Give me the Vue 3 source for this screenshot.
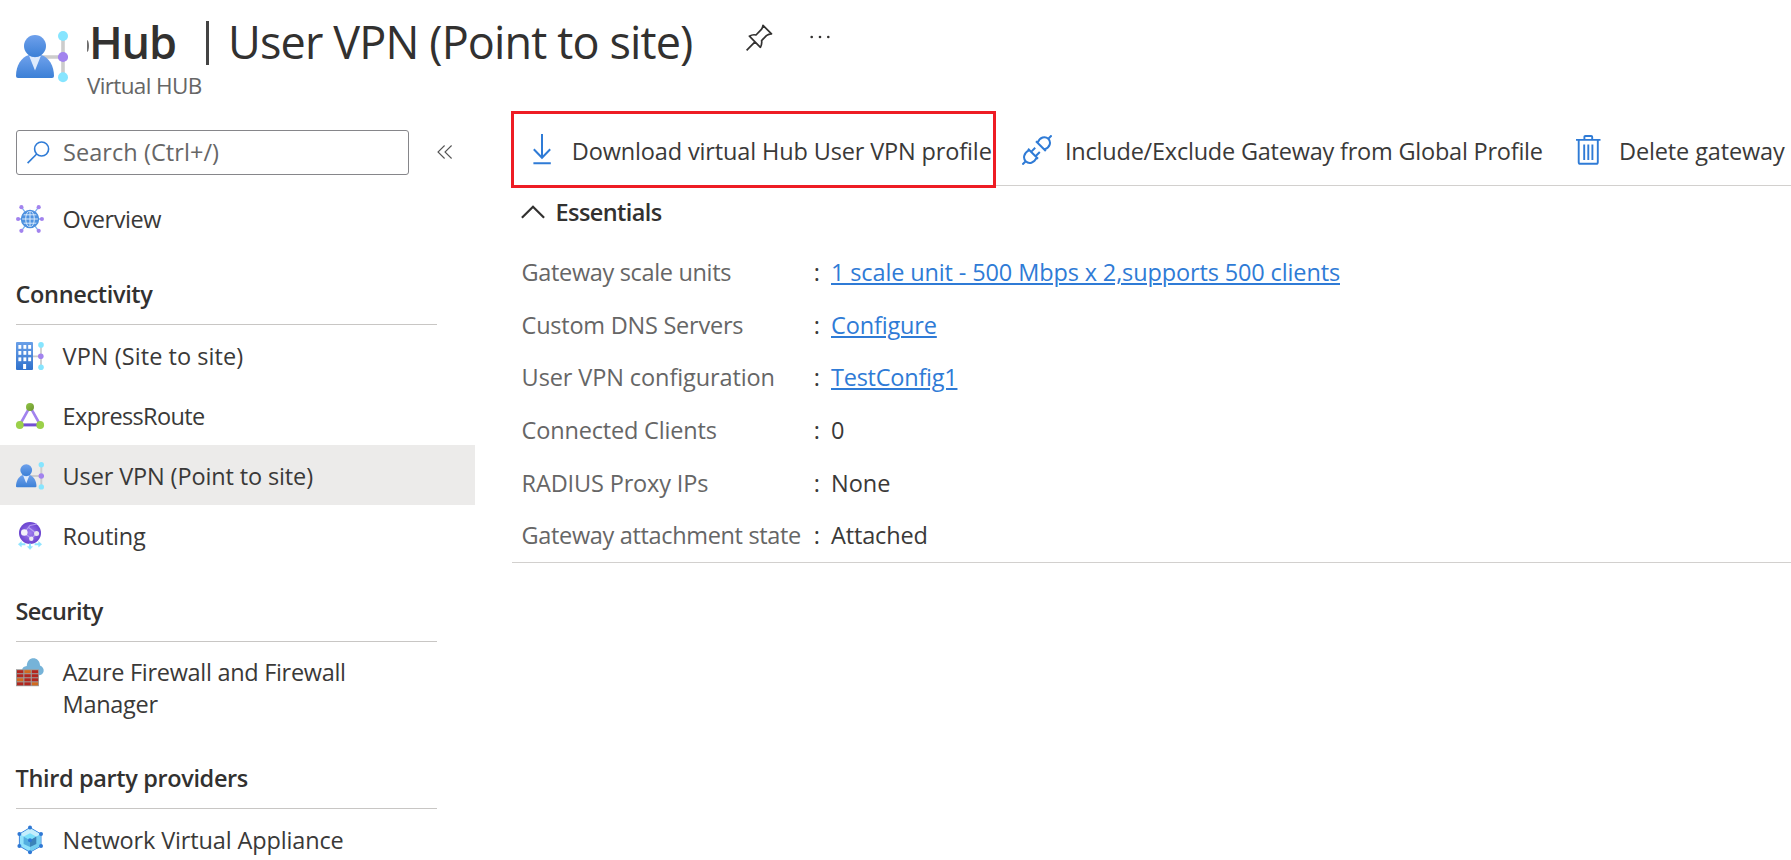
<script setup>
const groups = [
  { title: '', items: [{ icon: 'hub', label: 'Overview', track: -0.42 }] },
  {
    title: 'Connectivity', track: -0.34,
    items: [
      { icon: 'site', label: 'VPN (Site to site)', track: 0.06 },
      { icon: 'express', label: 'ExpressRoute', track: -0.63 },
      { icon: 'user', label: 'User VPN (Point to site)', track: -0.13, active: true },
      { icon: 'routing', label: 'Routing', track: -0.24 }
    ]
  },
  {
    title: 'Security', track: -0.55,
    items: [{ icon: 'firewall', label: 'Azure Firewall and Firewall Manager', track: -0.3, tall: true }]
  },
  {
    title: 'Third party providers', track: -0.36,
    items: [{ icon: 'appliance', label: 'Network Virtual Appliance', track: -0.14 }]
  }
]

const facts = [
  { name: 'Gateway scale units', nt: -0.34, value: '1 scale unit - 500 Mbps x 2,supports 500 clients', vt: -0.13, link: true },
  { name: 'Custom DNS Servers', nt: -0.24, value: 'Configure', vt: -0.15, link: true },
  { name: 'User VPN configuration', nt: -0.1, value: 'TestConfig1', vt: -0.24, link: true },
  { name: 'Connected Clients', nt: -0.18, value: '0', vt: 0 },
  { name: 'RADIUS Proxy IPs', nt: -0.15, value: 'None', vt: 0 },
  { name: 'Gateway attachment state', nt: -0.34, value: 'Attached', vt: -0.16 }
]

const spacing = (v) => ({ letterSpacing: v + 'px' })
const columns = [2.4, 7.4, 12.2]
const windowRows = [3, 9, 15.4]
const bricks = [
  ['#b3261e', '#d2691e', '#b3261e'],
  ['#b3261e', '#b3261e', '#b3261e'],
  ['#d2691e', '#b3261e', '#b3261e'],
  ['#b3261e', '#b3261e', '#d2691e']
]
const cubeNodes = [[14, 1.6], [25, 8], [25, 20], [14, 26.2], [3.4, 20], [3.4, 8], [14, 14.2]]
</script>

<template>
  <div class="page">
    <svg class="defs" aria-hidden="true">
      <defs>
        <linearGradient id="blue" x1="0" y1="0" x2="0" y2="1">
          <stop offset="0" stop-color="#6fa1ec" /><stop offset="1" stop-color="#3c80d6" />
        </linearGradient>
        <linearGradient id="tower" x1="0" y1="0" x2="0" y2="1">
          <stop offset="0" stop-color="#6aa0e8" /><stop offset="1" stop-color="#2f71cc" />
        </linearGradient>
        <radialGradient id="violet">
          <stop offset="0" stop-color="#a07df0" /><stop offset="1" stop-color="#6a43cf" />
        </radialGradient>
        <linearGradient id="leaf" x1="0" y1="0" x2="1" y2="1">
          <stop offset="0" stop-color="#92c746" /><stop offset="1" stop-color="#6c9430" />
        </linearGradient>
        <symbol id="user-vpn" viewBox="0 0 52 52">
          <path d="M26 26H47M47 5V46" stroke="#ccc" stroke-width="3.6" fill="none" />
          <path d="M2 47Q0 47 0 45C0 35 5 26 13 24H25C33 26 38 35 38 45Q38 47 36 47Z" fill="url(#blue)" />
          <path d="M13 24.5 19 39.5 25 24.5Q19 28 13 24.5Z" fill="#dfebfc" />
          <circle cx="19" cy="15" r="11" fill="url(#blue)" />
          <circle cx="47" cy="5" r="5" fill="#86e5ff" />
          <circle cx="47" cy="26" r="5.1" fill="#a283ee" />
          <circle cx="47" cy="46.3" r="5" fill="#86e5ff" />
        </symbol>
      </defs>
    </svg>

    <header class="header">
      <svg class="logo"><use href="#user-vpn" /></svg>
      <div class="heading">
        <h1 class="title">
          <span class="cut" /><b class="name">Hub</b><i class="divider" /><span class="section">User VPN (Point to site)</span>
          <svg class="pin" width="28" height="28" viewBox="0 0 28 28" fill="none" stroke="#323130" stroke-width="1.7" stroke-linejoin="round">
            <path d="M17 1.3 25.5 9.8Q23 9.6 20.4 11.6L15.6 16.6Q16.2 20 14.4 23.3L3.4 12.2Q6.5 10.2 10 11L15.4 5.4Q16.8 3.4 17 1.3ZM9.2 17.6.6 26.4" />
          </svg>
          <svg class="dots" width="20" height="4" viewBox="0 0 20 4" fill="#323130">
            <circle cx="1.7" cy="2" r="1.3" /><circle cx="10" cy="2" r="1.3" /><circle cx="18.3" cy="2" r="1.3" />
          </svg>
        </h1>
        <p class="subtitle">Virtual HUB</p>
      </div>
    </header>

    <div class="body">
      <nav class="sidebar">
        <div class="search-row">
          <div class="search">
            <svg width="23" height="23" viewBox="0 0 23 23" fill="none" stroke="#2f7bd6" stroke-width="1.6">
              <circle cx="14.6" cy="8" r="7" /><path d="M9.7 13 .6 22.1" />
            </svg>
            <span>Search (Ctrl+/)</span>
          </div>
          <svg class="collapse" width="16" height="14" viewBox="0 0 16 14" fill="none" stroke="#555" stroke-width="1.1">
            <path d="M7.6.5 1 7l6.6 6.5M14.6.5 8 7l6.6 6.5" />
          </svg>
        </div>

        <section v-for="g in groups" :key="g.title" class="group">
          <h2 v-if="g.title" :style="spacing(g.track)">{{ g.title }}</h2>
          <div v-for="it in g.items" :key="it.label" class="item" :class="{ active: it.active, tall: it.tall }">
            <svg v-if="it.icon === 'user'" class="icon"><use href="#user-vpn" /></svg>
            <svg v-else class="icon" viewBox="0 0 28 28">
              <g v-if="it.icon === 'hub'">
                <path d="M5.5 2.2 22.5 25.8M22.5 2.2 5.5 25.8M2 14H26" stroke="#7fb3ee" stroke-width="1.3" />
                <circle cx="14" cy="14" r="8.6" fill="#4f93e0" />
                <g fill="none" stroke="#d5e8fb" stroke-width="1">
                  <ellipse cx="14" cy="14" rx="4.3" ry="8" /><path d="M14 6v16M6 14h16M7.5 9.8h13M7.5 18.2h13" />
                </g>
                <circle cx="14" cy="14" r="8.6" fill="none" stroke="#4a8edd" stroke-width="1.2" />
                <g fill="#a283ee">
                  <circle cx="5.4" cy="2.2" r="2.1" /><circle cx="22.7" cy="2.2" r="2.1" /><circle cx="2.1" cy="14" r="2.1" />
                  <circle cx="25.9" cy="14" r="2.1" /><circle cx="5.4" cy="25.8" r="2.1" /><circle cx="22.7" cy="25.8" r="2.1" />
                </g>
              </g>
              <g v-else-if="it.icon === 'site'">
                <path d="M16 14.3H25M25 3V25" stroke="#ccc" stroke-width="1.8" />
                <rect width="17" height="28" rx="1" fill="url(#tower)" />
                <g fill="#fff">
                  <template v-for="y in windowRows" :key="y">
                    <rect v-for="x in columns" :key="x" :x="x" :y="y" width="2.9" height="3.8" />
                  </template>
                  <rect x="7.1" y="22" width="3" height="5" />
                </g>
                <circle cx="25" cy="2.9" r="2.8" fill="#86e5ff" /><circle cx="24.8" cy="14.3" r="2.8" fill="#a283ee" />
                <circle cx="25" cy="25.2" r="2.8" fill="#86e5ff" />
              </g>
              <g v-else-if="it.icon === 'express'">
                <path d="M4 22.5 14 4.7 24 22.5" stroke="#a283ee" stroke-width="2.6" fill="none" />
                <path d="M4 22.9H24" stroke="#7350d4" stroke-width="3" />
                <circle cx="14" cy="4.9" r="4" fill="url(#leaf)" />
                <circle cx="3.8" cy="23" r="3.9" fill="#9bd04a" /><circle cx="24.2" cy="23" r="3.9" fill="#9bd04a" />
              </g>
              <g v-else-if="it.icon === 'routing'">
                <circle cx="14" cy="11" r="11" fill="url(#violet)" />
                <path d="M8 11 14 3.5 21 2M12 5 20.5 11.5M8 11 15.5 16.5 20.5 11.5" fill="none" stroke="#b49df2" stroke-width="1.2" />
                <circle cx="8.3" cy="10.5" r="3.3" fill="#f3f1fa" /><circle cx="20.6" cy="11.4" r="2.5" fill="#e8e6ee" />
                <circle cx="15.3" cy="16.8" r="2.2" fill="#eceaf2" />
                <g stroke="#8fe4ff" fill="#8fe4ff">
                  <path d="M4 22.3H9.4M18.6 22.3H24M14 21.5V25" stroke-width="2" />
                  <path d="M5.4 19.6v5.4L2.2 22.3ZM22.6 19.6v5.4L25.8 22.3ZM11.3 24.6h5.4L14 27.6Z" stroke-width=".4" />
                </g>
              </g>
              <g v-else-if="it.icon === 'firewall'">
                <path d="M8 17.5Q5.5 15 5.7 12.5 6.5 8.4 10.8 8C10.8-2.6 24-2.2 24 7.6 29.5 9.6 29 17.5 22 17.5Z" fill="#76b3d8" />
                <rect y="11.2" width="23" height="17" fill="#9d9d9d" />
                <template v-for="(row, r) in bricks" :key="r">
                  <rect v-for="(color, c) in row" :key="c" :x="1 + c * 7.4" :y="12.2 + r * 4.05" width="6.3" height="3" :fill="color" />
                </template>
              </g>
              <g v-else>
                <path d="M14 1.6 25 8V20L14 26.2 3.4 20V8Z" fill="#90e2fb" stroke="#3f86dc" stroke-width="1" />
                <path d="M14 2.2 24.5 8.2 14 14.2 4 8.2Z" fill="#c5eefc" />
                <path d="M14 14.2 24.5 8.3V19.7L14 25.7Z" fill="#73cdf0" />
                <path d="M14 7.3 20.3 10.6 14 14.2 7.6 10.6Z" fill="#7be0fa" />
                <path d="M7.6 10.6 14 14.2V21L7.6 18Z" fill="#52aee0" /><path d="M20.3 10.6 14 14.2V21L20.3 18Z" fill="#3b83b8" />
                <circle v-for="(n, i) in cubeNodes" :key="i" :cx="n[0]" :cy="n[1]" r="2" fill="#2f78d4" />
              </g>
            </svg>
            <span class="label" :style="spacing(it.track)">{{ it.label }}</span>
          </div>
        </section>
      </nav>

      <main class="main">
        <div class="toolbar">
          <button class="cmd highlight">
            <svg width="20" height="31" viewBox="0 0 20 31" fill="none" stroke="#2f7bd6" stroke-width="2">
              <path d="M9 0V24M.8 15.3 9 23.7 17.2 15.3M.4 29.3H17.8" />
            </svg>
            <span>Download virtual Hub User VPN profile</span>
          </button>
          <button class="cmd include">
            <svg width="30" height="30" viewBox="0 0 30 30" fill="none" stroke="#2f7bd6" stroke-width="2">
              <path d="M14 6.2 23.8 16M15.6 7.6C18 2 23 .8 26.3 3.7 29.4 7 28.2 12.5 22.4 14.4M26.3 3.7 29.6.4" />
              <path d="M6 13.8 16 23.8M7.2 15.2C1.6 18 .8 23.2 3.7 26.3 7 29.3 12 28.2 14.6 22.6M3.7 26.3.4 29.6M9.4 16.6 13.2 12.8M13.8 21 17.8 17" />
            </svg>
            <span>Include/Exclude Gateway from Global Profile</span>
          </button>
          <button class="cmd delete">
            <svg width="25" height="30" viewBox="0 0 25 30" fill="none" stroke="#2f7bd6" stroke-width="1.9">
              <path d="M0 4.9H24.5M8.4 4.5V2Q8.4 1 9.4 1H15.2Q16.2 1 16.2 2V4.5M2.7 5V27.2Q2.7 28.8 4.3 28.8H20.2Q21.8 28.8 21.8 27.2V5M8.2 9.5V25M12.3 9.5V25M16.4 9.5V25" />
            </svg>
            <span>Delete gateway</span>
          </button>
        </div>

        <section class="essentials">
          <h3>
            <svg width="24" height="14" viewBox="0 0 24 14" fill="none" stroke="#323130" stroke-width="2.2"><path d="M.9 12.8 12 1.7 23.1 12.8" /></svg>
            <span>Essentials</span>
          </h3>
          <dl>
            <div v-for="f in facts" :key="f.name" class="fact">
              <dt :style="spacing(f.nt)">{{ f.name }}</dt>
              <span class="colon">:</span>
              <dd><a v-if="f.link" :style="spacing(f.vt)">{{ f.value }}</a><span v-else :style="spacing(f.vt)">{{ f.value }}</span></dd>
            </div>
          </dl>
        </section>
      </main>
    </div>
  </div>
</template>

<style>
body { margin: 0; background: #fff; overflow: hidden; }
</style>

<style scoped>
.page {
  width: 1791px; height: 860px; overflow: hidden; background: #fff; color: #3a3938;
  font: 400 23.5px/32px "Open Sans", "Noto Sans", sans-serif; font-weight: 370;
}
.page * { box-sizing: border-box; }
.defs { position: absolute; width: 0; height: 0; }
h1, h2, h3, p, dl, dd { margin: 0; }
h1, h2, h3 { color: #323130; }
svg { flex: none; display: block; }

.header { display: flex; height: 111px; padding-left: 16px; }
.logo { width: 52px; height: 52px; margin-top: 31px; }
.heading { margin-left: 19px; padding-top: 11px; }
.title { display: flex; height: 60px; font-size: 45px; line-height: 62px; font-weight: 370; }
.cut { width: 2px; height: 12px; margin-top: 29px; background: #323130; border-radius: 0 2px 2px 0 / 0 6px 6px 0; opacity: .7; }
.name { width: 116px; font-weight: 640; letter-spacing: -1.2px; }
.divider { width: 3px; height: 44px; margin-top: 10px; margin-left: 1px; background: #444; }
.section { width: 518px; margin-left: 19px; letter-spacing: -.87px; white-space: nowrap; }
.pin { margin-top: 13px; }
.dots { margin: 24px 0 0 36px; }
.subtitle { margin-top: -1px; font-size: 22.5px; letter-spacing: -.65px; color: #666; line-height: 32px; }

.body { display: flex; }
.sidebar { width: 475px; }
.search-row { display: flex; align-items: center; padding: 19px 0 13px 16px; }
.search { display: flex; align-items: center; width: 393px; height: 45px; padding-left: 10px; border: 1px solid #86868a; border-radius: 3px; color: #666; }
.search span { margin: 0 0 1px 13px; letter-spacing: .06px; }
.collapse { margin: 0 0 2px 28px; }
.item { display: flex; align-items: center; height: 60px; padding: 0 16px; }
.item.active { background: #ecebea; }
.icon { width: 28px; height: 28px; margin-top: 2px; overflow: visible; }
.label { margin-left: 18.6px; padding-top: 2px; }
.group h2 { display: flex; align-items: flex-end; width: 421px; height: 77px; margin-left: 16px; padding-bottom: 14px; border-bottom: 1px solid #c8c6c4; font-size: 23.5px; font-weight: 600; line-height: 32px; text-indent: -.5px; }
.item.tall { height: 90px; align-items: flex-start; padding-top: 14px; }
.tall .label { width: 320px; padding-top: 0; }

.main { width: 1279px; margin-left: 37px; }
.toolbar { display: flex; height: 75px; border-bottom: 1px solid #d2d0ce; }
.cmd { display: flex; align-items: center; height: 74px; padding: 3px 0 0; border: 0; background: none; color: inherit; font: inherit; text-align: left; white-space: nowrap; }
.cmd span { padding-top: 3px; }
.highlight { width: 485px; height: 77px; margin-left: -1px; padding: 0 0 0 19px; border: 3px solid #ee1c24; }
.highlight span { margin-left: 18.8px; letter-spacing: -.14px; }
.include { margin-left: 26px; }
.include span { width: 497px; margin-left: 13px; letter-spacing: -.22px; }
.delete { margin-left: 14px; }
.delete span { margin-left: 18px; letter-spacing: -.13px; }

.essentials { height: 377px; border-bottom: 1px solid #d2d0ce; padding-left: 9px; }
.essentials h3 { display: flex; align-items: center; height: 60px; font-size: 23.5px; font-weight: 600; letter-spacing: -.58px; }
.essentials h3 span { margin: 0 0 8px 10.5px; }
.essentials h3 svg { margin-bottom: 9px; }
.fact { display: flex; height: 52.6px; align-items: center; }
dt { width: 292px; padding-left: .6px; color: #666; }
.colon { width: 18px; padding-left: .7px; }
a { color: #2f7bd6; text-decoration: underline; text-decoration-thickness: 2px; text-underline-offset: 2px; }
</style>
